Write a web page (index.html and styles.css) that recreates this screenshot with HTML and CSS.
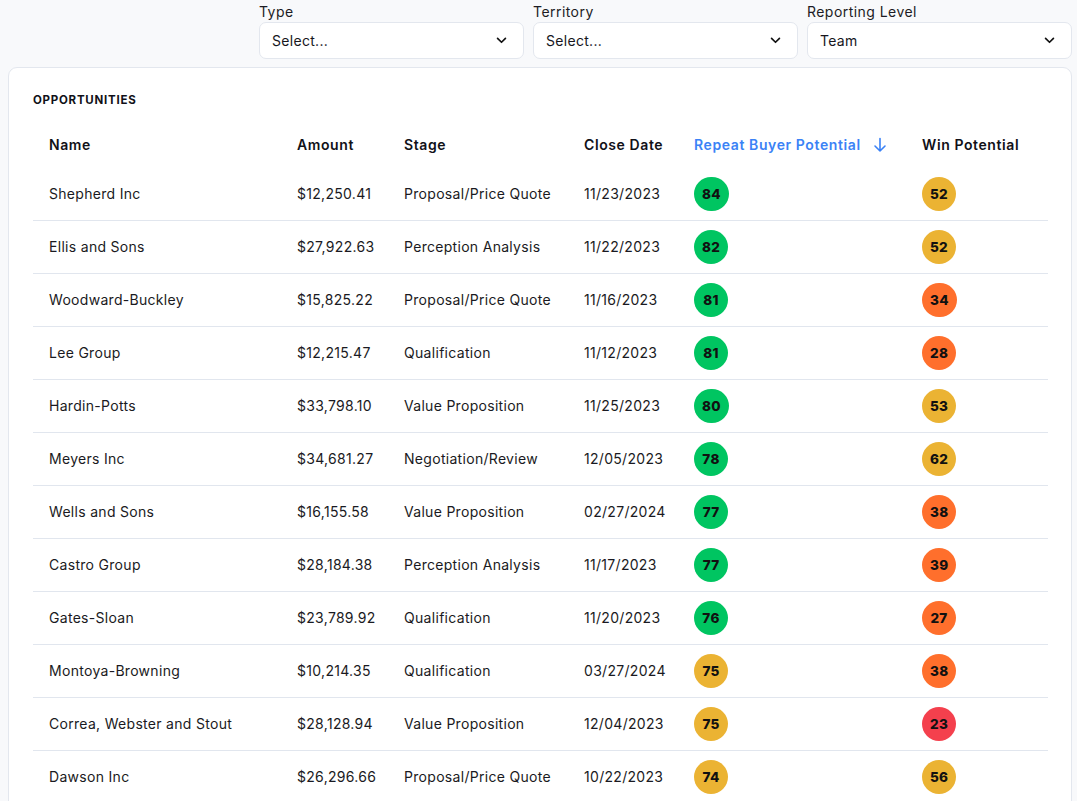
FILE: index.html
```html
<!DOCTYPE html>
<html>
<head>
<meta charset="utf-8">
<link rel="stylesheet" href="styles.css">
</head>
<body>
<div class="filters">
  <div class="filter">
    <label class="flabel">Type</label>
    <div class="select"><span>Select...</span><svg class="chev" viewBox="0 0 12 8" width="11" height="7"><path d="M1.5 1.5 L6 6 L10.5 1.5" fill="none" stroke="#111" stroke-width="1.9" stroke-linecap="round" stroke-linejoin="round"/></svg></div>
  </div>
  <div class="filter">
    <label class="flabel">Territory</label>
    <div class="select"><span>Select...</span><svg class="chev" viewBox="0 0 12 8" width="11" height="7"><path d="M1.5 1.5 L6 6 L10.5 1.5" fill="none" stroke="#111" stroke-width="1.9" stroke-linecap="round" stroke-linejoin="round"/></svg></div>
  </div>
  <div class="filter">
    <label class="flabel">Reporting Level</label>
    <div class="select"><span>Team</span><svg class="chev" viewBox="0 0 12 8" width="11" height="7"><path d="M1.5 1.5 L6 6 L10.5 1.5" fill="none" stroke="#111" stroke-width="1.9" stroke-linecap="round" stroke-linejoin="round"/></svg></div>
  </div>
</div>
<div class="card">
  <h2 class="title">OPPORTUNITIES</h2>
  <table class="tbl">
    <colgroup>
      <col class="c-name"><col class="c-amt"><col class="c-stage"><col class="c-date"><col class="c-rep"><col class="c-win">
    </colgroup>
    <thead>
      <tr>
        <th>Name</th><th>Amount</th><th>Stage</th><th>Close Date</th>
        <th class="sorted">Repeat Buyer Potential <svg class="arrow" viewBox="0 0 14 16" width="14" height="16"><path d="M7 1.5 V14 M2 9 L7 14 L12 9" fill="none" stroke="#3b82f6" stroke-width="1.6" stroke-linecap="round" stroke-linejoin="round"/></svg></th>
        <th>Win Potential</th>
      </tr>
    </thead>
    <tbody>
      <tr><td>Shepherd Inc</td><td>$12,250.41</td><td>Proposal/Price Quote</td><td>11/23/2023</td><td><span class="badge green">84</span></td><td><span class="badge yellow">52</span></td></tr>
      <tr><td>Ellis and Sons</td><td>$27,922.63</td><td>Perception Analysis</td><td>11/22/2023</td><td><span class="badge green">82</span></td><td><span class="badge yellow">52</span></td></tr>
      <tr><td>Woodward-Buckley</td><td>$15,825.22</td><td>Proposal/Price Quote</td><td>11/16/2023</td><td><span class="badge green">81</span></td><td><span class="badge orange">34</span></td></tr>
      <tr><td>Lee Group</td><td>$12,215.47</td><td>Qualification</td><td>11/12/2023</td><td><span class="badge green">81</span></td><td><span class="badge orange">28</span></td></tr>
      <tr><td>Hardin-Potts</td><td>$33,798.10</td><td>Value Proposition</td><td>11/25/2023</td><td><span class="badge green">80</span></td><td><span class="badge yellow">53</span></td></tr>
      <tr><td>Meyers Inc</td><td>$34,681.27</td><td>Negotiation/Review</td><td>12/05/2023</td><td><span class="badge green">78</span></td><td><span class="badge yellow">62</span></td></tr>
      <tr><td>Wells and Sons</td><td>$16,155.58</td><td>Value Proposition</td><td>02/27/2024</td><td><span class="badge green">77</span></td><td><span class="badge orange">38</span></td></tr>
      <tr><td>Castro Group</td><td>$28,184.38</td><td>Perception Analysis</td><td>11/17/2023</td><td><span class="badge green">77</span></td><td><span class="badge orange">39</span></td></tr>
      <tr><td>Gates-Sloan</td><td>$23,789.92</td><td>Qualification</td><td>11/20/2023</td><td><span class="badge green">76</span></td><td><span class="badge orange">27</span></td></tr>
      <tr><td>Montoya-Browning</td><td>$10,214.35</td><td>Qualification</td><td>03/27/2024</td><td><span class="badge yellow">75</span></td><td><span class="badge orange">38</span></td></tr>
      <tr><td>Correa, Webster and Stout</td><td>$28,128.94</td><td>Value Proposition</td><td>12/04/2023</td><td><span class="badge yellow">75</span></td><td><span class="badge red">23</span></td></tr>
      <tr><td>Dawson Inc</td><td>$26,296.66</td><td>Proposal/Price Quote</td><td>10/22/2023</td><td><span class="badge yellow">74</span></td><td><span class="badge yellow">56</span></td></tr>
    </tbody>
  </table>
</div>
</body>
</html>
```
FILE: styles.css
```css
* { box-sizing: border-box; }
html, body { margin: 0; padding: 0; }
body {
  background: #f8f9fb;
  font-family: Inter, "Noto Sans", sans-serif;
  color: #16161d;
  overflow: hidden;
}
.filters {
  display: flex;
  justify-content: flex-end;
  gap: 9px;
  padding: 3px 5px 0 0;
}
.filter {
  width: 265px;
  display: flex;
  flex-direction: column;
}
.flabel {
  font-size: 14px;
  line-height: 18px;
  height: 19px;
  letter-spacing: 0.45px;
  color: #1c1c24;
}
.select {
  height: 37px;
  background: #fff;
  border: 1px solid #e3e7ee;
  border-radius: 7px;
  display: flex;
  align-items: center;
  justify-content: space-between;
  padding: 0 16px 0 12px;
  font-size: 14px;
  letter-spacing: 0.3px;
  color: #16161d;
}
.chev { display: block; }
.card {
  margin: 8px 5px 0 8px;
  background: #fff;
  border: 1px solid #e3e7ee;
  border-radius: 9px;
  padding: 24px 23px 0 24px;
  height: 760px;
}
.title {
  margin: 0;
  font-size: 11.5px;
  font-weight: 700;
  letter-spacing: 0.75px;
  line-height: 16px;
  color: #111118;
}
.tbl {
  margin-top: 12px;
  width: 1015px;
  border-collapse: collapse;
  table-layout: fixed;
}
.c-name { width: 248px; }
.c-amt { width: 107px; }
.c-stage { width: 180px; }
.c-date { width: 110px; }
.c-rep { width: 228px; }
.c-win { width: 142px; }
.tbl th {
  text-align: left;
  font-size: 14px;
  font-weight: 600;
  letter-spacing: 0.6px;
  height: 48px;
  padding: 0 0 0 16px;
  white-space: nowrap;
  color: #111118;
}
.tbl th.sorted { color: #3b82f6; }
.arrow { vertical-align: -3px; margin-left: 8px; }
.tbl td {
  font-size: 14px;
  letter-spacing: 0.3px;
  height: 53px;
  padding: 0 0 0 16px;
  white-space: nowrap;
  border-bottom: 1px solid #e1e6ee;
  color: #1a1a22;
}
.tbl tbody tr:first-child td { height: 52px; }
.badge {
  display: inline-flex;
  align-items: center;
  justify-content: center;
  height: 34px;
  min-width: 34px;
  padding: 0 8px;
  border-radius: 17px;
  font-size: 13.5px;
  font-weight: 800;
  letter-spacing: 0.3px;
  color: #111;
}
.green { background: #00c561; }
.yellow { background: #ebb333; }
.orange { background: #ff6f2c; }
.red { background: #f4404d; }
```
